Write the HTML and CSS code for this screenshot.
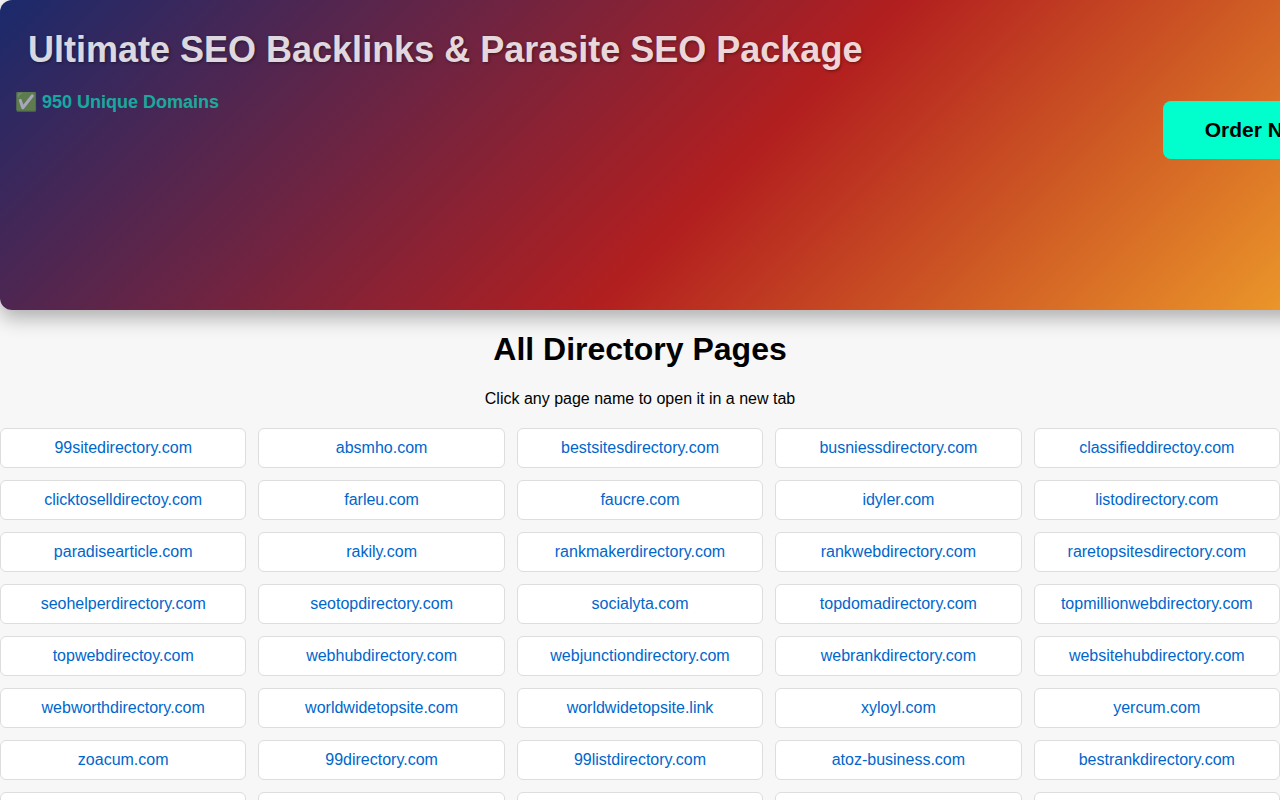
FILE: index.html
```html
<!DOCTYPE html>
<html lang="en">
<head>
<meta charset="utf-8">
<title>All Directory Pages</title>
<link rel="stylesheet" href="styles.css">
</head>
<body>
<section class="banner">
  <div class="banner-copy">
    <h2 class="banner-title">Ultimate SEO Backlinks &amp; Parasite SEO Package</h2>
    <p class="banner-feature">✅ 950 Unique Domains</p>
  </div>
  <button class="order" type="button">Order Now</button>
</section>
<main>
  <h1 class="heading">All Directory Pages</h1>
  <p class="intro">Click any page name to open it in a new tab</p>
  <ul class="grid">
    <li class="card"><a href="#" target="_blank">99sitedirectory.com</a></li>
    <li class="card"><a href="#" target="_blank">absmho.com</a></li>
    <li class="card"><a href="#" target="_blank">bestsitesdirectory.com</a></li>
    <li class="card"><a href="#" target="_blank">busniessdirectory.com</a></li>
    <li class="card"><a href="#" target="_blank">classifieddirectoy.com</a></li>
    <li class="card"><a href="#" target="_blank">clicktoselldirectoy.com</a></li>
    <li class="card"><a href="#" target="_blank">farleu.com</a></li>
    <li class="card"><a href="#" target="_blank">faucre.com</a></li>
    <li class="card"><a href="#" target="_blank">idyler.com</a></li>
    <li class="card"><a href="#" target="_blank">listodirectory.com</a></li>
    <li class="card"><a href="#" target="_blank">paradisearticle.com</a></li>
    <li class="card"><a href="#" target="_blank">rakily.com</a></li>
    <li class="card"><a href="#" target="_blank">rankmakerdirectory.com</a></li>
    <li class="card"><a href="#" target="_blank">rankwebdirectory.com</a></li>
    <li class="card"><a href="#" target="_blank">raretopsitesdirectory.com</a></li>
    <li class="card"><a href="#" target="_blank">seohelperdirectory.com</a></li>
    <li class="card"><a href="#" target="_blank">seotopdirectory.com</a></li>
    <li class="card"><a href="#" target="_blank">socialyta.com</a></li>
    <li class="card"><a href="#" target="_blank">topdomadirectory.com</a></li>
    <li class="card"><a href="#" target="_blank">topmillionwebdirectory.com</a></li>
    <li class="card"><a href="#" target="_blank">topwebdirectoy.com</a></li>
    <li class="card"><a href="#" target="_blank">webhubdirectory.com</a></li>
    <li class="card"><a href="#" target="_blank">webjunctiondirectory.com</a></li>
    <li class="card"><a href="#" target="_blank">webrankdirectory.com</a></li>
    <li class="card"><a href="#" target="_blank">websitehubdirectory.com</a></li>
    <li class="card"><a href="#" target="_blank">webworthdirectory.com</a></li>
    <li class="card"><a href="#" target="_blank">worldwidetopsite.com</a></li>
    <li class="card"><a href="#" target="_blank">worldwidetopsite.link</a></li>
    <li class="card"><a href="#" target="_blank">xyloyl.com</a></li>
    <li class="card"><a href="#" target="_blank">yercum.com</a></li>
    <li class="card"><a href="#" target="_blank">zoacum.com</a></li>
    <li class="card"><a href="#" target="_blank">99directory.com</a></li>
    <li class="card"><a href="#" target="_blank">99listdirectory.com</a></li>
    <li class="card"><a href="#" target="_blank">atoz-business.com</a></li>
    <li class="card"><a href="#" target="_blank">bestrankdirectory.com</a></li>
    <li class="card"></li>
    <li class="card"></li>
    <li class="card"></li>
    <li class="card"></li>
    <li class="card"></li>
  </ul>
</main>
</body>
</html>
```

FILE: styles.css
```css
* {
  box-sizing: border-box;
}

body {
  margin: 0;
  overflow-x: hidden;
  background: #f7f7f7;
  font-family: "Liberation Sans", Arial, sans-serif;
  font-size: 16px;
  color: #000;
}

/* The banner is wider than small windows and runs off the right edge. */
.banner {
  display: flex;
  justify-content: space-between;
  align-items: flex-start;
  min-width: 1500px;
  min-height: 310px;
  padding: 28px 146px 28px 15px;
  border-radius: 12px;
  background: linear-gradient(135deg, #1a2a6c, #b21f1f, #fdbb2d);
  box-shadow: 0 8px 20px rgba(0, 0, 0, 0.3);
}

.banner-title {
  margin: 0 0 20px;
  padding-left: 13px;
  font-size: 36px;
  line-height: 44px;
  color: #fff;
  text-shadow: 1px 1px 3px rgba(0, 0, 0, 0.5);
  opacity: 0.82;
}

.banner-feature {
  margin: 0;
  font-size: 18px;
  font-weight: bold;
  line-height: 20px;
  color: #00ffcc;
  opacity: 0.6;
}

.order {
  margin-top: 73px;
  padding: 17px 42px;
  border: 0;
  border-radius: 8px;
  background: #00ffcc;
  font: bold 21px/24px "Liberation Sans", Arial, sans-serif;
  color: #000;
  cursor: pointer;
}

.heading {
  margin: 21px 0 22px;
  font-size: 32px;
  line-height: 37px;
  text-align: center;
}

.intro {
  margin: 0 0 20px;
  line-height: 18px;
  text-align: center;
}

.grid {
  display: grid;
  grid-template-columns: repeat(5, 1fr);
  gap: 12px;
  margin: 0;
  padding: 0;
  list-style: none;
}

.card {
  min-height: 40px;
  padding: 10px;
  border: 1px solid #ddd;
  border-radius: 6px;
  background: #fff;
  line-height: 18px;
  text-align: center;
}

.card a {
  color: #0066cc;
  text-decoration: none;
}
```
